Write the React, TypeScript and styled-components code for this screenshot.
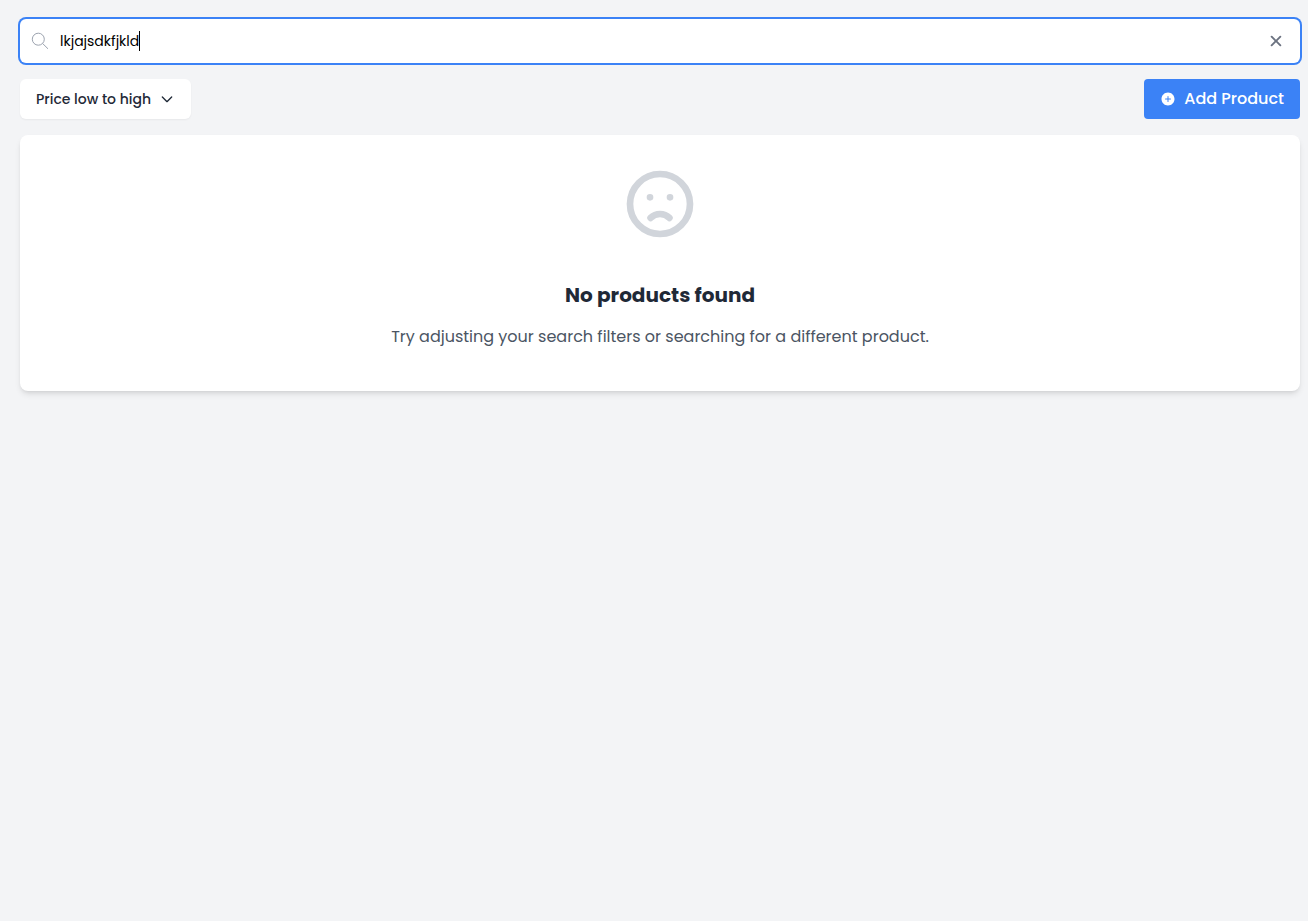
import React, { useState } from "react";
import styled, { createGlobalStyle } from "styled-components";
import { IoAddCircle, IoClose } from "react-icons/io5";

const GlobalStyle = createGlobalStyle`
  *, *::before, *::after { box-sizing: border-box; }
  body {
    margin: 0;
    background: #f3f4f6;
    color: #1f2937;
    font-family: Poppins, Inter, "Open Sans", sans-serif;
    font-size: 16px;
    line-height: 24px;
  }
  button, input, select { font: inherit; color: inherit; margin: 0; }
`;

const Page = styled.main`
  display: flex;
  flex-direction: column;
  gap: 16px;
  padding: 19px 8px 16px 20px;
`;

const SearchBar = styled.label`
  display: flex;
  align-items: center;
  height: 44px;
  padding: 0 14px 0 10px;
  border-radius: 6px;
  background: #fff;
  box-shadow: 0 0 0 2px #3b82f6;
  cursor: text;
`;

const SearchGlyph = styled.svg`
  flex: none;
  width: 20px;
  height: 20px;
  margin-right: 10px;
  color: #9ca3af;
`;

const SearchInput = styled.input`
  field-sizing: content;
  min-width: 1px;
  padding: 0;
  border: 0;
  outline: none;
  background: transparent;
  color: #000;
  caret-color: transparent;
  font-size: 14px;
  line-height: 20px;
`;

const Caret = styled.span`
  width: 1px;
  height: 20px;
  background: #000;
`;

const ClearButton = styled.button`
  display: flex;
  margin-left: auto;
  padding: 0;
  border: 0;
  background: none;
  color: #6b7280;
  cursor: pointer;
`;

const Toolbar = styled.div`
  display: flex;
  align-items: center;
  justify-content: space-between;
`;

const SortControl = styled.div`
  display: grid;
  align-items: center;
  border-radius: 6px;
  background: #fff;
  box-shadow: 0 1px 2px rgba(0, 0, 0, 0.05);

  > * { grid-area: 1 / 1; }
  > svg {
    justify-self: end;
    margin-right: 16px;
    pointer-events: none;
  }
`;

const SortSelect = styled.select`
  appearance: none;
  width: 171px;
  height: 40px;
  padding: 0 40px 0 16px;
  border: 0;
  border-radius: 6px;
  background: transparent;
  font-size: 14px;
  font-weight: 500;
  cursor: pointer;
`;

const AddButton = styled.button`
  display: flex;
  align-items: center;
  justify-content: space-between;
  gap: 8px;
  min-width: 156px;
  height: 40px;
  padding: 0 16px;
  border: 0;
  border-radius: 4px;
  background: #3b82f6;
  color: #fff;
  font-weight: 500;
  cursor: pointer;
`;

const EmptyCard = styled.section`
  display: flex;
  flex-direction: column;
  align-items: center;
  min-height: 256px;
  padding: 29px 24px 40px;
  border-radius: 8px;
  background: #fff;
  box-shadow: 0 4px 6px -1px rgba(0, 0, 0, 0.1), 0 2px 4px -2px rgba(0, 0, 0, 0.1);
  text-align: center;
`;

const SadFace = styled.svg`
  width: 80px;
  height: 80px;
  color: #d1d5db;
`;

const EmptyTitle = styled.h2`
  margin: 37px 0 0;
  font-size: 20px;
  font-weight: 700;
  line-height: 28px;
`;

const EmptyText = styled.p`
  margin: 16px 0 0;
  color: #4b5563;
`;

export default function App() {
  const [query, setQuery] = useState("lkjajsdkfjkld");

  return (
    <>
      <GlobalStyle />
      <Page>
        <SearchBar>
          <SearchGlyph viewBox="0 0 20 20" fill="none" stroke="currentColor" aria-hidden="true">
            <circle cx="8.3" cy="8.2" r="6" />
            <path d="M12.6 12.5L18 17.8" />
          </SearchGlyph>
          <SearchInput
            type="text"
            aria-label="Search products"
            value={query}
            onChange={(e) => setQuery(e.target.value)}
          />
          <Caret />
          <ClearButton type="button" aria-label="Clear search" onClick={() => setQuery("")}>
            <IoClose size={20} aria-hidden="true" />
          </ClearButton>
        </SearchBar>

        <Toolbar>
          <SortControl>
            <SortSelect aria-label="Sort products" defaultValue="low">
              <option value="low">Price low to high</option>
              <option value="high">Price high to low</option>
            </SortSelect>
            <svg width="16" height="16" viewBox="0 0 24 24" fill="none" stroke="currentColor" strokeWidth="2" strokeLinecap="round" strokeLinejoin="round" aria-hidden="true">
              <path d="M19 9l-7 7-7-7" />
            </svg>
          </SortControl>
          <AddButton type="button">
            <IoAddCircle size={16} aria-hidden="true" />
            Add Product
          </AddButton>
        </Toolbar>

        <EmptyCard>
          <SadFace viewBox="0 0 24 24" fill="none" stroke="currentColor" strokeWidth="2" strokeLinecap="round" strokeLinejoin="round" aria-hidden="true">
            <path d="M9.172 16.172a4 4 0 015.656 0M9 10h.01M15 10h.01M21 12a9 9 0 11-18 0 9 9 0 0118 0z" />
          </SadFace>
          <EmptyTitle>No products found</EmptyTitle>
          <EmptyText>Try adjusting your search filters or searching for a different product.</EmptyText>
        </EmptyCard>
      </Page>
    </>
  );
}
